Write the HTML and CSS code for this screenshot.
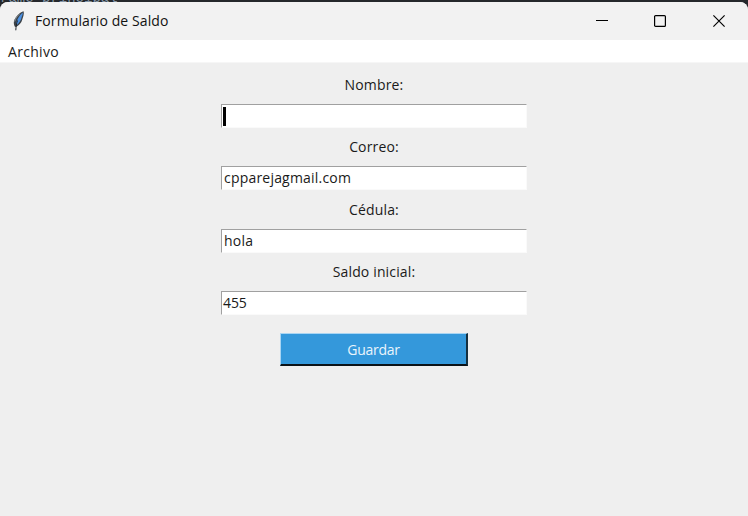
FILE: index.html
```html
<!DOCTYPE html>
<html lang="es">
<head>
<meta charset="utf-8">
<title>Formulario de Saldo</title>
<link rel="stylesheet" href="styles.css">
</head>
<body>
<div class="backdrop"><span>rame_principal</span></div>
<main class="window">
  <header class="titlebar">
    <svg class="feather" width="16" height="22" viewBox="0 0 16 22">
      <path d="M12.600 1.200C9 2.200 4.400 6.400 3 11c-.5 2 0 4 .7 5.400l1.100.6c3-1.500 5.700-4 6.500-7.600.8-2.500 2.100-5.400 1.300-8.200z" fill="#3c4248"/>
      <path d="M11.800 2.400C9 4.500 6 9 5 14l1.600.5c2-2 3.500-4.700 4-7.200.5-1.700 1.400-3.300 1.200-4.900z" fill="#4a90e2"/>
      <path d="M9 3.500C6.500 5.600 4.300 8.500 3.700 11.500" fill="none" stroke="#8d9499" stroke-width="1"/>
      <path d="M6.500 10.500C5.500 13.500 5 16.500 4.800 20.300" fill="none" stroke="#20252b" stroke-width="1"/>
    </svg>
    <h1 class="title">Formulario de Saldo</h1>
    <div class="controls">
      <svg width="12" height="12" viewBox="0 0 12 12"><path d="M0 5.500h12" stroke="#000" stroke-width="1"/></svg>
      <svg width="12" height="12" viewBox="0 0 12 12"><rect x=".6" y=".6" width="10.800" height="10.800" rx="1" fill="none" stroke="#000" stroke-width="1.200"/></svg>
      <svg width="12" height="12" viewBox="0 0 12 12"><path d="M.4.4l11.200 11.200M11.600.4L.4 11.600" stroke="#000" stroke-width="1.150"/></svg>
    </div>
  </header>
  <nav class="menubar"><span class="menu">Archivo</span></nav>
  <form class="form">
    <div class="row"><label class="label">Nombre:</label><div class="field"><i class="caret"></i></div></div>
    <div class="row"><label class="label">Correo:</label><div class="field email">cpparejagmail.com</div></div>
    <div class="row"><label class="label">Cédula:</label><div class="field">hola</div></div>
    <div class="row"><label class="label">Saldo inicial:</label><div class="field number">455</div></div>
    <button class="save" type="button">Guardar</button>
  </form>
</main>
</body>
</html>
```
FILE: styles.css
```css
* { box-sizing: border-box; }
body {
  margin: 0;
  width: 748px;
  height: 516px;
  overflow: hidden;
  background: #25282c;
  font-family: "Open Sans", "Noto Sans", sans-serif;
  font-size: 14px;
  color: #1a1a1a;
}
.backdrop {
  height: 2px;
  overflow: hidden;
  font: 14px/16px "Liberation Mono", monospace;
  color: #8495a5;
}
.backdrop span { display: block; margin-top: -10px; }
.window {
  height: 514px;
  background: #efefef;
  border-radius: 8px 8px 0 0;
  overflow: hidden;
}
.titlebar {
  display: flex;
  align-items: center;
  height: 38px;
  background: #f2f2f2;
}
.feather { margin: 0 8px 0 11px; }
.title {
  margin: 0;
  font-size: 14px;
  font-weight: 400;
  line-height: 20px;
  letter-spacing: 0.100px;
  color: #111;
}
.controls {
  display: flex;
  gap: 46px;
  margin-left: auto;
  margin-right: 23px;
}
.controls svg:last-child { margin-left: 1px; }
.menubar {
  height: 23px;
  padding-left: 8px;
  background: #fff;
  line-height: 24px;
  border-bottom: 1px solid #f6f6f6;
  letter-spacing: 0.300px;
}
.form {
  display: flex;
  flex-direction: column;
  align-items: center;
  padding-top: 12px;
}
.row {
  display: flex;
  flex-direction: column;
  align-items: center;
  height: 62.500px;
}
.row:nth-child(odd) { height: 62px; }
.row:nth-child(even) { height: 63px; }
.label {
  height: 29px;
  line-height: 20px;
  letter-spacing: 0.150px;
}
.field {
  width: 306px;
  height: 24px;
  padding-left: 2px;
  border: 1px solid #fafafa;
  border-top-color: #a0a0a0;
  border-left-color: #a0a0a0;
  background: #fff;
  line-height: 22px;
  letter-spacing: 0.200px;
}
.number { padding-left: 1px; letter-spacing: -0.100px; }
.caret {
  display: block;
  width: 3px;
  height: 19px;
  margin: 2px 0 0 -1px;
  background: #000;
}
.save {
  width: 188px;
  height: 33px;
  margin-top: 8px;
  padding: 2px 0 0;
  border: solid;
  border-width: 1px 2px 2px 1px;
  border-color: #a9d5f3 #15303f #0b1217 #a9d5f3;
  background: #3498db;
  font: inherit;
  line-height: 28px;
  letter-spacing: -0.250px;
  color: #eaf5fc;
}
```
